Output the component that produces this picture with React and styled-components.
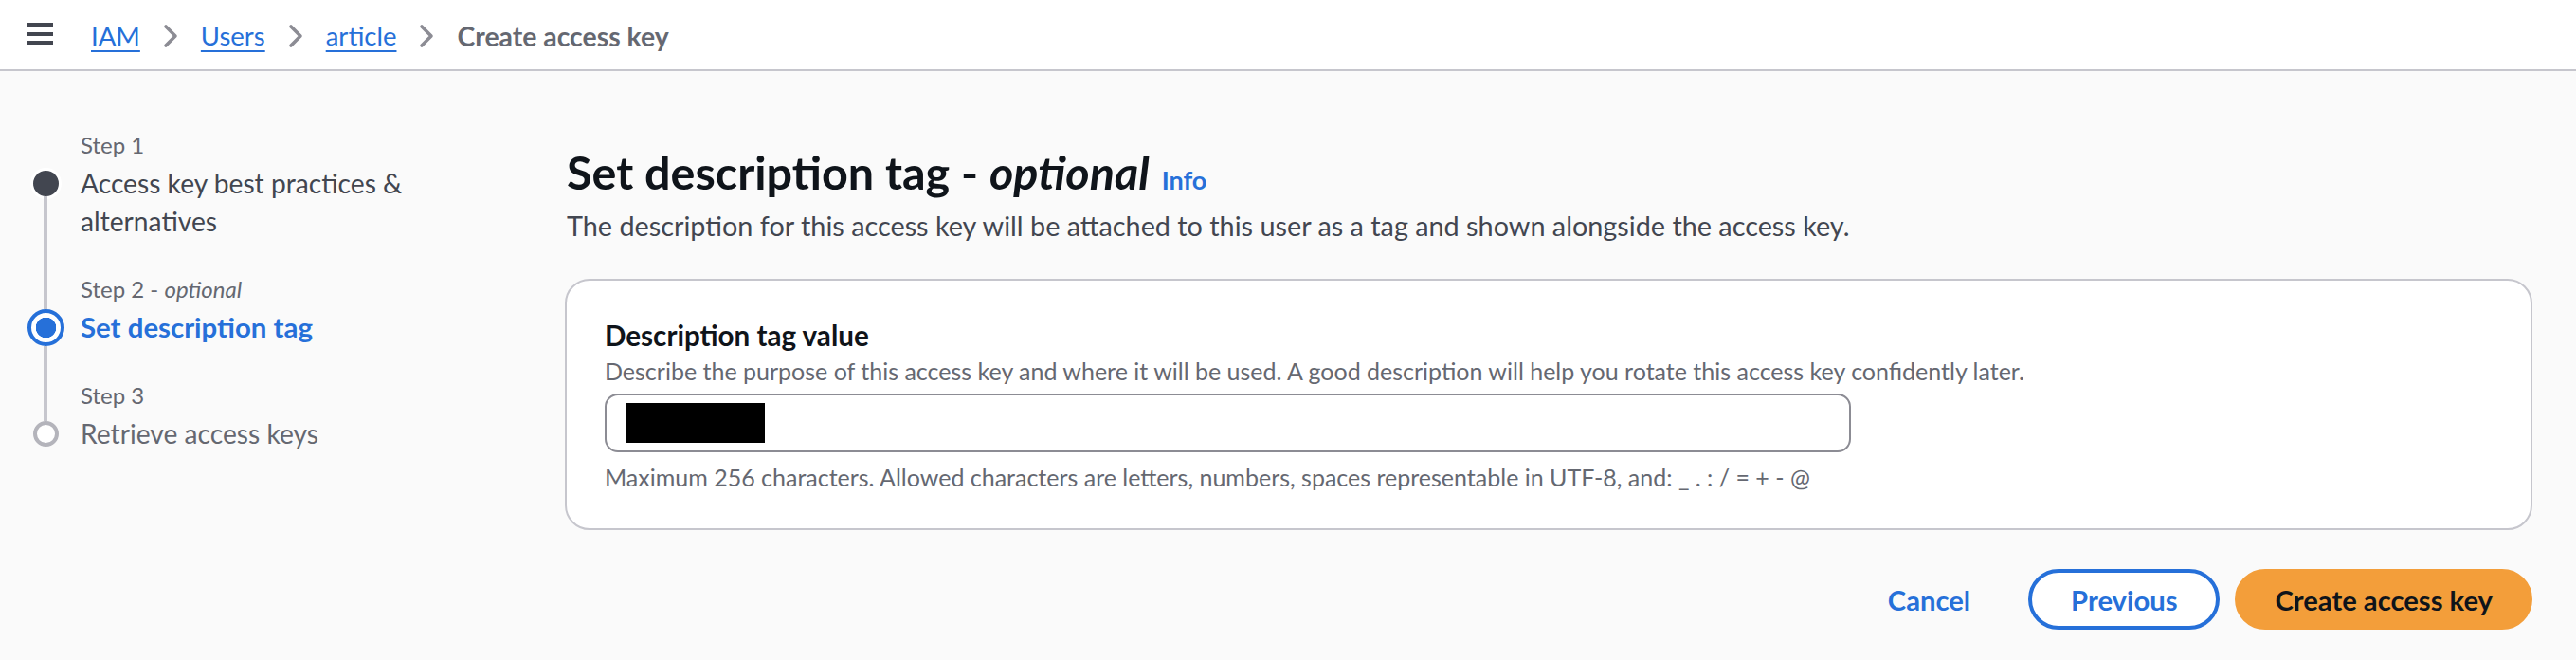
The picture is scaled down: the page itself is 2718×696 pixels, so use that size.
import React from "react";
import styled, { createGlobalStyle, css } from "styled-components";

const GlobalStyle = createGlobalStyle`
  html, body { margin: 0; padding: 0; }
  body {
    background: #fafafa;
    font-family: "Lato", "Open Sans", sans-serif;
    color: #0f141a;
    -webkit-font-smoothing: antialiased;
  }
  * { box-sizing: border-box; }
`;

const blue = "#2670d9";

const Page = styled.div`
  width: 2718px;
  min-height: 696px;
  background: #fafafa;
`;

const TopBar = styled.header`
  height: 75px;
  background: #ffffff;
  border-bottom: 2px solid #c6c6cd;
  display: flex;
  align-items: center;
  padding: 2px 0 0 28px;
  gap: 40px;
`;

const MenuButton = styled.button`
  border: 0;
  background: transparent;
  padding: 0;
  margin: 0;
  width: 28px;
  height: 24px;
  display: flex;
  cursor: pointer;
  margin-top: -3px;
`;

const Crumbs = styled.nav`
  display: flex;
  align-items: center;
  gap: 24px;
`;

const CrumbLink = styled.a`
  font-size: 27.5px;
  line-height: 36px;
  color: ${blue};
  text-decoration: underline;
  text-decoration-thickness: 2px;
  text-underline-offset: 5px;
`;

const CrumbCurrent = styled.span`
  font-size: 28.4px;
  line-height: 36px;
  font-weight: 700;
  color: #656871;
`;

const Chevron = styled.svg`
  width: 16px;
  height: 26px;
  flex: none;
`;

const Body = styled.div`
  display: grid;
  grid-template-columns: 596px 1fr;
  padding-right: 46px;
`;

const Nav = styled.ol`
  list-style: none;
  margin: 0;
  padding: 63px 0 0 11px;
`;

const Step = styled.li`
  display: grid;
  grid-template-columns: 74px 1fr;
`;

const Rail = styled.div`
  display: flex;
  flex-direction: column;
  align-items: center;
`;

const Segment = styled.div`
  width: 4px;
  background: ${(p) => (p.$hidden ? "transparent" : "#c6c6cd")};
  ${(p) =>
    p.$grow
      ? css`flex: 1;`
      : css`height: ${p.$h}px;`}
`;

const Marker = styled.div`
  flex: none;
  border-radius: 50%;
  ${(p) =>
    p.$state === "done" &&
    css`
      width: 27px;
      height: 27px;
      background: #424650;
      box-shadow: 0 0 0 3px #ffffff;
    `}
  ${(p) =>
    p.$state === "current" &&
    css`
      width: 39px;
      height: 39px;
      border: 4px solid ${blue};
      background: radial-gradient(circle, ${blue} 0 10.5px, #ffffff 11px);
    `}
  ${(p) =>
    p.$state === "todo" &&
    css`
      width: 27px;
      height: 27px;
      border: 4px solid #b4b4bb;
      background: #ffffff;
    `}
`;

const StepText = styled.div`
  padding-bottom: 37px;
  max-width: 400px;
`;

const StepLabel = styled.div`
  font-size: 24px;
  line-height: 30px;
  color: #656871;
  margin-bottom: 5px;
`;

const StepTitle = styled.div`
  font-size: ${(p) => (p.$current ? "29.4px" : "28.2px")};
  line-height: 40px;
  font-weight: ${(p) => (p.$current ? 700 : 400)};
  color: ${(p) => (p.$current ? blue : p.$done ? "#424650" : "#656871")};
`;

const Main = styled.main`
  padding-top: 76px;
  display: flex;
  flex-direction: column;
`;

const HeadingRow = styled.div`
  display: flex;
  align-items: baseline;
  gap: 13px;
  margin-bottom: 7px;
  padding-left: 2px;
`;

const Heading = styled.h1`
  margin: 0;
  font-size: 48.5px;
  line-height: 60px;
  font-weight: 700;
  color: #0f141a;
  letter-spacing: 0;
`;

const InfoLink = styled.a`
  font-size: 27px;
  font-weight: 700;
  color: ${blue};
  text-decoration: none;
`;

const Subtitle = styled.p`
  margin: 0 0 36px;
  padding-left: 2px;
  font-size: 28.8px;
  line-height: 40px;
  color: #424650;
`;

const Card = styled.section`
  background: #ffffff;
  border: 2px solid #c6c6cd;
  border-radius: 26px;
  padding: 38px 40px 37px;
`;

const FieldLabel = styled.label`
  display: block;
  font-size: 29.6px;
  line-height: 40px;
  font-weight: 700;
  color: #0f141a;
`;

const FieldHint = styled.div`
  font-size: 25px;
  line-height: 34px;
  color: #656871;
  margin-bottom: ${(p) => p.$mb || 0}px;
  margin-top: ${(p) => p.$mt || 0}px;
`;

const InputBox = styled.div`
  width: 1315px;
  height: 62px;
  border: 2px solid #8c8c94;
  border-radius: 14px;
  background: #ffffff;
  display: flex;
  align-items: center;
  padding-left: 20px;
`;

const Redacted = styled.div`
  width: 147px;
  height: 42px;
  background: #000000;
`;

const Actions = styled.div`
  display: flex;
  justify-content: flex-end;
  align-items: center;
  gap: 16px;
  margin-top: 41px;
`;

const Button = styled.button`
  height: 64px;
  padding: 0 41px;
  border-radius: 32px;
  font-family: "Lato", "Open Sans", sans-serif;
  font-size: 29.2px;
  font-weight: 700;
  cursor: pointer;
  border: 4px solid transparent;
  ${(p) =>
    p.$variant === "link" &&
    css`
      background: transparent;
      color: ${blue};
    `}
  ${(p) =>
    p.$variant === "normal" &&
    css`
      background: #ffffff;
      border-color: ${blue};
      color: ${blue};
    `}
  ${(p) =>
    p.$variant === "primary" &&
    css`
      background: #f39e3a;
      border-color: #f39e3a;
      color: #0f141a;
      padding: 0 38px;
    `}
`;

const ChevronIcon = () => (
  <Chevron viewBox="0 0 16 26">
    <polyline points="3,3 13,13 3,23" fill="none" stroke="#8c8c94" strokeWidth="3.6" strokeLinecap="round" strokeLinejoin="round" />
  </Chevron>
);

const steps = [
  { label: "Step 1", title: "Access key best practices & alternatives", state: "done" },
  { label: "Step 2", optional: true, title: "Set description tag", state: "current" },
  { label: "Step 3", title: "Retrieve access keys", state: "todo" },
];

export default function App() {
  return (
    <Page>
      <GlobalStyle />
      <TopBar>
        <MenuButton aria-label="Open navigation">
          <svg width="28" height="24" viewBox="0 0 28 24">
            <rect x="0" y="0" width="28" height="4" fill="#424650" />
            <rect x="0" y="10" width="28" height="4" fill="#424650" />
            <rect x="0" y="19" width="28" height="4" fill="#424650" />
          </svg>
        </MenuButton>
        <Crumbs>
          <CrumbLink href="#">IAM</CrumbLink>
          <ChevronIcon />
          <CrumbLink href="#">Users</CrumbLink>
          <ChevronIcon />
          <CrumbLink href="#">article</CrumbLink>
          <ChevronIcon />
          <CrumbCurrent>Create access key</CrumbCurrent>
        </Crumbs>
      </TopBar>
      <Body>
        <Nav>
          {steps.map((s, i) => {
            const big = s.state === "current";
            return (
              <Step key={s.label}>
                <Rail>
                  <Segment $h={big ? 35.5 : 41.5} $hidden={i === 0} />
                  <Marker $state={s.state} />
                  <Segment $grow $hidden={i === steps.length - 1} />
                </Rail>
                <StepText>
                  <StepLabel>
                    {s.label}
                    {s.optional && (
                      <>
                        {" - "}
                        <i>optional</i>
                      </>
                    )}
                  </StepLabel>
                  <StepTitle $current={s.state === "current"} $done={s.state === "done"}>
                    {s.title}
                  </StepTitle>
                </StepText>
              </Step>
            );
          })}
        </Nav>
        <Main>
          <HeadingRow>
            <Heading>
              Set description tag - <i>optional</i>
            </Heading>
            <InfoLink href="#">Info</InfoLink>
          </HeadingRow>
          <Subtitle>
            The description for this access key will be attached to this user as a tag and shown alongside the access key.
          </Subtitle>
          <Card>
            <FieldLabel>Description tag value</FieldLabel>
            <FieldHint $mb={7}>
              Describe the purpose of this access key and where it will be used. A good description will help you rotate this access key confidently later.
            </FieldHint>
            <InputBox>
              <Redacted />
            </InputBox>
            <FieldHint $mt={9}>
              Maximum 256 characters. Allowed characters are letters, numbers, spaces representable in UTF-8, and: _ . : / = + - @
            </FieldHint>
          </Card>
          <Actions>
            <Button $variant="link">Cancel</Button>
            <Button $variant="normal">Previous</Button>
            <Button $variant="primary">Create access key</Button>
          </Actions>
        </Main>
      </Body>
    </Page>
  );
}
